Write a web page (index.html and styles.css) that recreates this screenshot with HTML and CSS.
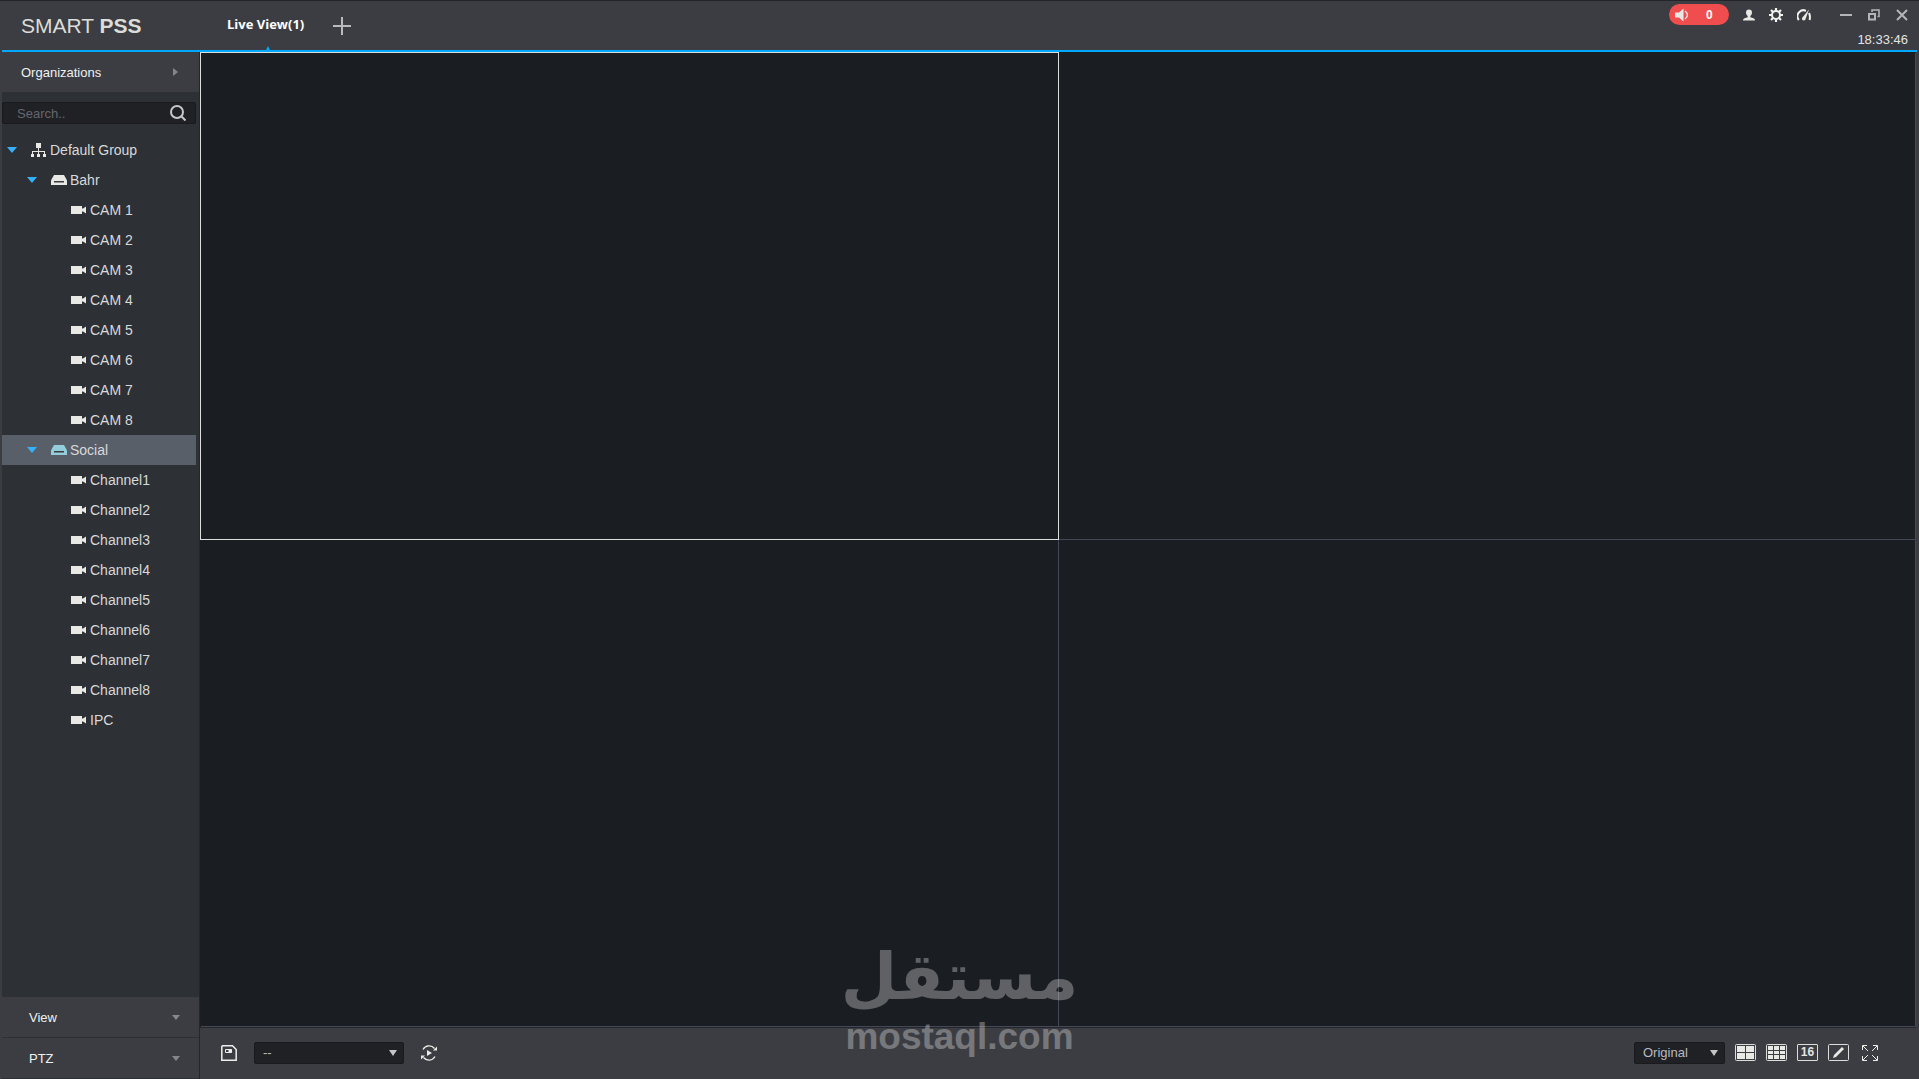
FILE: index.html
```html
<!DOCTYPE html>
<html lang="en">
<head>
    <meta charset="UTF-8">
    <meta name="viewport" content="width=device-width, initial-scale=1.0">
    <title>SMART PSS</title>
    <link rel="stylesheet" href="styles.css">
</head>
<body>
    <!-- shared icons -->
    <svg class="icon-defs" aria-hidden="true">
        <symbol id="icon-camera" viewBox="0 0 16 10">
            <path d="M0 1h11v2.500h1L15 1.500v7L12 6.500h-1V9H0z"/>
        </symbol>
        <symbol id="icon-device" viewBox="0 0 16 10">
            <path d="M3 0h10l2 3.500 1 2V10H0V5.500l1-2z"/>
            <path d="M3 6h10v1.500H3z" class="slot"/>
        </symbol>
    </svg>

    <header class="titlebar">
        <h1 class="logo">SMART <b>PSS</b></h1>
        <nav class="tabs">
            <a href="#" class="tab">Live View(1)</a>
            <button class="icon-btn" aria-label="New tab">
                <svg width="18" height="18" viewBox="0 0 18 18"><path d="M0 9h18M9 0v18" stroke="#b9babc" stroke-width="2"/></svg>
            </button>
        </nav>
        <div class="status">
            <div class="status-row">
                <button class="alarm">
                    <svg width="14" height="14" viewBox="0 0 14 14"><path d="M0 4.500h4L8.500 0.500v13L4 9.500H0z"/><path d="M10 3Q15 7 10 11" fill="none" stroke="#f4f4ee" stroke-width="1.300"/></svg>
                    <span>0</span>
                </button>
                <button class="icon-btn" aria-label="User">
                    <svg width="12" height="12" viewBox="0 0 12 12"><path d="M6 0.500c2 0 3 1.200 3 3C9 5.500 8 6.500 7.300 7v1.300l3.200 0.900Q12 9.800 12 11.500H0Q0 9.800 1.500 9.200l3.200-0.900V7C4 6.500 3 5.500 3 3.500c0-1.800 1-3 3-3z"/></svg>
                </button>
                <button class="icon-btn" aria-label="Settings">
                    <svg class="line" width="14" height="14" viewBox="0 0 14 14" stroke="#f0f0ec"><circle cx="7" cy="7" r="4" stroke-width="2"/><path d="M7 0v3M7 11v3M0 7h3M11 7h3M2 2l2 2M10 10l2 2M12 2l-2 2M4 10l-2 2" stroke-width="2.200"/></svg>
                </button>
                <button class="icon-btn" aria-label="System load">
                    <svg width="14" height="12" viewBox="0 0 14 12"><path d="M1.800 11A6 6 0 0 1 9 1.800M12 4Q13.500 7 12.600 11" fill="none" stroke="#f0f0ec" stroke-width="2"/><path d="M12 0.500 8.400 10.500Q7 12.300 5.200 10.700 4.600 9 5.800 8z"/></svg>
                </button>
                <div class="window-btns">
                    <button class="icon-btn" aria-label="Minimize">
                        <svg width="12" height="12" viewBox="0 0 12 12"><path d="M0 6h12" stroke="#b4b5b7" stroke-width="2"/></svg>
                    </button>
                    <button class="icon-btn" aria-label="Restore">
                        <svg class="line" width="12" height="12" viewBox="0 0 12 12" stroke="#b4b5b7"><path d="M1 5h6v5.500H1z" stroke-width="2"/><path d="M4 3V1h7v6.500H9.500" stroke-width="1.500"/></svg>
                    </button>
                    <button class="icon-btn" aria-label="Close">
                        <svg width="12" height="12" viewBox="0 0 12 12"><path d="M1 1l10 10M11 1L1 11" stroke="#b4b5b7" stroke-width="2"/></svg>
                    </button>
                </div>
            </div>
            <time class="clock">18:33:46</time>
        </div>
    </header>

    <div class="workspace">
        <aside class="sidebar">
            <button class="panel-head">Organizations <i class="caret-right"></i></button>

            <div class="search">
                <input type="text" aria-label="Search" placeholder="Search..">
                <button class="icon-btn" aria-label="Find">
                    <svg class="line" width="16" height="16" viewBox="0 0 16 16" stroke="#c6c7c8" stroke-width="2"><circle cx="7" cy="7" r="6"/><path d="M11 11l4.500 4.500"/></svg>
                </button>
            </div>

            <ul class="tree">
                <li class="node">
                    <button class="toggle" aria-label="Collapse Default Group"></button>
                    <svg class="node-icon group-icon" viewBox="0 0 16 14"><path d="M5 0h5v5H5zM0 11h3v3H0zM6 11h3v3H6zM12 11h3v3h-3zM7 5h1v6H7zM1 8h13v1H1zM1 8h1v3H1zM13 8h1v3h-1z"/></svg>
                    Default Group
                </li>
                <li class="node level-2">
                    <button class="toggle" aria-label="Collapse Bahr"></button>
                    <svg class="node-icon"><use href="#icon-device"/></svg>
                    Bahr
                </li>
                <li class="node camera"><svg class="node-icon"><use href="#icon-camera"/></svg>CAM 1</li>
                <li class="node camera"><svg class="node-icon"><use href="#icon-camera"/></svg>CAM 2</li>
                <li class="node camera"><svg class="node-icon"><use href="#icon-camera"/></svg>CAM 3</li>
                <li class="node camera"><svg class="node-icon"><use href="#icon-camera"/></svg>CAM 4</li>
                <li class="node camera"><svg class="node-icon"><use href="#icon-camera"/></svg>CAM 5</li>
                <li class="node camera"><svg class="node-icon"><use href="#icon-camera"/></svg>CAM 6</li>
                <li class="node camera"><svg class="node-icon"><use href="#icon-camera"/></svg>CAM 7</li>
                <li class="node camera"><svg class="node-icon"><use href="#icon-camera"/></svg>CAM 8</li>
                <li class="node level-2 selected">
                    <button class="toggle" aria-label="Collapse Social"></button>
                    <svg class="node-icon online"><use href="#icon-device"/></svg>
                    Social
                </li>
                <li class="node camera"><svg class="node-icon"><use href="#icon-camera"/></svg>Channel1</li>
                <li class="node camera"><svg class="node-icon"><use href="#icon-camera"/></svg>Channel2</li>
                <li class="node camera"><svg class="node-icon"><use href="#icon-camera"/></svg>Channel3</li>
                <li class="node camera"><svg class="node-icon"><use href="#icon-camera"/></svg>Channel4</li>
                <li class="node camera"><svg class="node-icon"><use href="#icon-camera"/></svg>Channel5</li>
                <li class="node camera"><svg class="node-icon"><use href="#icon-camera"/></svg>Channel6</li>
                <li class="node camera"><svg class="node-icon"><use href="#icon-camera"/></svg>Channel7</li>
                <li class="node camera"><svg class="node-icon"><use href="#icon-camera"/></svg>Channel8</li>
                <li class="node camera"><svg class="node-icon"><use href="#icon-camera"/></svg>IPC</li>
            </ul>

            <button class="panel-head panel-foot">View <i class="caret-down"></i></button>
            <button class="panel-head panel-foot">PTZ <i class="caret-down"></i></button>
        </aside>

        <main class="live">
            <div class="video-grid">
                <div class="video active"></div>
                <div class="video"></div>
                <div class="video"></div>
                <div class="video"></div>
            </div>

            <div class="toolbar">
                <button class="icon-btn" aria-label="Save view">
                    <svg class="line" width="16" height="16" viewBox="0 0 16 16" stroke="#eeeeea"><path d="M1.500 0.800h10L15.200 4.500v10.700H0.800V1.500z" stroke-width="1.500"/><path d="M4.500 4.500h6v3h-6z"/><path d="M8 4.500h2v3H8z" fill="#eeeeea"/></svg>
                </button>
                <div class="select view-select">
                    <select aria-label="Saved view"><option>--</option></select>
                </div>
                <button class="icon-btn" aria-label="Start tour">
                    <svg width="16" height="16" viewBox="0 0 16 16"><path d="M2 4.500A7 7 0 0 1 13.500 3.500M14 11.500A7 7 0 0 1 2.500 12.500" fill="none" stroke="#eeeeea" stroke-width="1.300"/><path d="M16 1.500v4h-4zM0 14.500v-4h4zM6 5l5 3-5 3z"/></svg>
                </button>

                <div class="layouts">
                    <div class="select scale-select">
                        <select aria-label="Picture scale"><option>Original</option></select>
                    </div>
                    <button class="icon-btn" aria-label="4 windows">
                        <svg width="21" height="17" viewBox="0 0 21 17"><rect x="0.500" y="0.500" width="20" height="16" rx="1" fill="none" stroke="#dcdcd9"/><path d="M2 2h8v6H2zM11 2h8v6h-8zM2 9h8v6H2zM11 9h8v6h-8z"/></svg>
                    </button>
                    <button class="icon-btn" aria-label="9 windows">
                        <svg width="21" height="17" viewBox="0 0 21 17"><rect x="0.500" y="0.500" width="20" height="16" rx="1" fill="none" stroke="#dcdcd9"/><path d="M2 2h5v4H2zM8 2h5v4H8zM14 2h5v4h-5zM2 7h5v3H2zM8 7h5v3H8zM14 7h5v3h-5zM2 11h5v4H2zM8 11h5v4H8zM14 11h5v4h-5z"/></svg>
                    </button>
                    <button class="split-16">16</button>
                    <button class="icon-btn" aria-label="Custom layout">
                        <svg width="21" height="17" viewBox="0 0 21 17"><rect x="0.500" y="0.500" width="20" height="16" rx="1" fill="none" stroke="#dcdcd9"/><path d="M14 3l2 2-8 8-3 1 1-3z"/></svg>
                    </button>
                    <button class="icon-btn fullscreen" aria-label="Full screen">
                        <svg class="line" width="16" height="16" viewBox="0 0 16 16" stroke="#eeeeea"><path d="M0.500 5V0.500H5M11 0.500h4.500V5M15.500 11v4.500H11M5 15.500H0.500V11M1 1l5 5M15 1l-5 5M15 15l-5-5M1 15l5-5"/></svg>
                    </button>
                </div>
            </div>
        </main>
    </div>

    <div class="watermark">
        <span class="watermark-ar" lang="ar">مستقل</span>
        <span class="watermark-en">mostaql.com</span>
    </div>
</body>
</html>
```

FILE: styles.css
```css
* {
    box-sizing: border-box;
}
body {
    display: flex;
    flex-direction: column;
    height: 100vh;
    margin: 0;
    padding: 0 2px;
    overflow: hidden;
    background-color: #3b3d42;
    border-top: 1px solid #22242a;
    color: #e4e4e2;
    font-family: "Liberation Sans", Arial, sans-serif;
    font-size: 13px;
}
button {
    padding: 0;
    border: none;
    background: none;
    color: inherit;
    font: inherit;
}
svg {
    display: block;
    fill: #e8e8e4;
}
.line {
    fill: none;
}
.icon-defs {
    position: absolute;
    width: 0;
    height: 0;
}

/* title bar */
.titlebar {
    display: flex;
    flex: none;
    height: 51px;
    border-bottom: 2px solid #00a8ff;
}
.logo {
    width: 197px;
    margin: 0;
    padding-left: 19px;
    color: #dcdcd8;
    font-size: 21px;
    font-weight: normal;
    line-height: 50px;
}
.tabs {
    display: flex;
    align-items: center;
    gap: 29px;
    padding-left: 28px;
}
.tab {
    position: relative;
    padding-bottom: 2px;
    color: #fff;
    font-family: "Open Sans", sans-serif;
    font-size: 13px;
    font-weight: bold;
    line-height: 47px;
    text-decoration: none;
}
.tab::after {
    content: "";
    position: absolute;
    bottom: 0;
    left: 50%;
    border: 2px solid transparent;
    border-top: none;
    border-bottom: 4px solid #00a8ff;
}
.status {
    margin-left: auto;
    padding-right: 9px;
}
.status-row {
    display: flex;
    align-items: center;
    gap: 14px;
    height: 27px;
}
.alarm {
    display: flex;
    align-items: center;
    gap: 17px;
    width: 60px;
    height: 21px;
    padding-left: 6px;
    border-radius: 11px;
    background-color: #f04e4e;
    color: #fff;
    font-weight: bold;
    font-size: 12px;
}
.window-btns {
    display: flex;
    gap: 16px;
    padding-left: 15px;
}
.clock {
    display: block;
    text-align: right;
    line-height: 24px;
}

/* sidebar */
.workspace {
    display: flex;
    flex: 1;
    min-height: 0;
}
.sidebar {
    display: flex;
    flex: none;
    flex-direction: column;
    width: 198px;
    border-right: 1px solid #24262b;
    background-color: #2d3035;
}
.panel-head {
    display: flex;
    flex: none;
    align-items: center;
    justify-content: space-between;
    height: 40px;
    padding: 0 21px 0 19px;
    background-color: #3b3d42;
    color: #f0f0f0;
}
.panel-foot {
    height: 41px;
    padding: 0 19px 0 27px;
    border-bottom: 1px solid #2d3035;
}
.caret-right {
    border: 4px solid transparent;
    border-right: none;
    border-left: 5px solid #85878a;
}
.caret-down {
    border: 4px solid transparent;
    border-bottom: none;
    border-top: 5px solid #85878a;
}
.search {
    display: flex;
    align-items: center;
    height: 22px;
    margin: 10px 3px 11px 0;
    padding: 0 9px 0 14px;
    border: 1px solid #191a1d;
    border-radius: 2px;
    background-color: #202125;
}
.search input {
    flex: 1;
    min-width: 0;
    padding: 0;
    border: none;
    outline: none;
    background: none;
    color: #e4e4e2;
    font: inherit;
}
.search input::placeholder {
    color: #65666f;
}
.tree {
    flex: 1;
    margin: 0;
    padding: 0;
    list-style: none;
    font-size: 14px;
}
.node {
    display: flex;
    align-items: center;
    height: 30px;
    margin-right: 3px;
    padding-left: 5px;
    color: #d8d9da;
}
.level-2 {
    padding-left: 25px;
}
.camera {
    padding-left: 69px;
}
.selected {
    background-color: #585f69;
}
.toggle {
    margin-right: 14px;
    border: 5px solid transparent;
    border-top: 6px solid #35b0fb;
    border-bottom: none;
}
.node-icon {
    width: 16px;
    height: 10px;
    margin-right: 3px;
}
.group-icon {
    height: 14px;
}
.slot {
    fill: #3a3c3e;
}
.online {
    fill: #93cddb;
}

/* live view */
.live {
    display: flex;
    flex: 1;
    flex-direction: column;
    min-width: 0;
}
.video-grid {
    display: grid;
    flex: 1;
    grid-template-columns: 1fr 1fr;
    grid-template-rows: 1fr 1fr;
    margin-right: 1px;
    padding: 1px 0 0 1px;
    border-bottom: 1px solid #24262b;
    background-color: #1a1d21;
}
.video {
    border-right: 1px solid #434856;
    border-bottom: 1px solid #434856;
}
.active {
    margin: -1px 0 0 -1px;
    border: 1px solid #dcdddd;
}
.toolbar {
    display: flex;
    flex: none;
    align-items: center;
    gap: 17px;
    height: 51px;
    padding: 0 39px 2px 21px;
}
.select {
    position: relative;
}
.select select {
    appearance: none;
    display: block;
    width: 100%;
    height: 22px;
    padding: 0 8px;
    border: 1px solid #191a1d;
    border-radius: 2px;
    background-color: #202125;
    color: #b9bac2;
    font: inherit;
}
.select::after {
    content: "";
    position: absolute;
    top: 8px;
    right: 7px;
    border: 4px solid transparent;
    border-top: 6px solid #c4c5c6;
    border-bottom: none;
    pointer-events: none;
}
.view-select {
    width: 150px;
}
.scale-select {
    width: 91px;
}
.layouts {
    display: flex;
    align-items: center;
    gap: 10px;
    margin-left: auto;
}
.split-16 {
    width: 21px;
    height: 17px;
    border: 1px solid #dcdcd9;
    border-radius: 1px;
    font-size: 12px;
    font-weight: bold;
    line-height: 15px;
}
.fullscreen {
    margin-left: 3px;
}

/* watermark over the video area */
.watermark {
    position: absolute;
    bottom: 20px;
    left: 50%;
    display: flex;
    flex-direction: column;
    align-items: center;
    transform: translateX(-50%);
    color: #fff;
    opacity: 0.3;
    pointer-events: none;
}
.watermark-ar {
    font-family: "DejaVu Sans", sans-serif;
    font-size: 65px;
    font-weight: bold;
    line-height: 76px;
}
.watermark-en {
    font-size: 37px;
    font-weight: bold;
    line-height: 44px;
}
```
